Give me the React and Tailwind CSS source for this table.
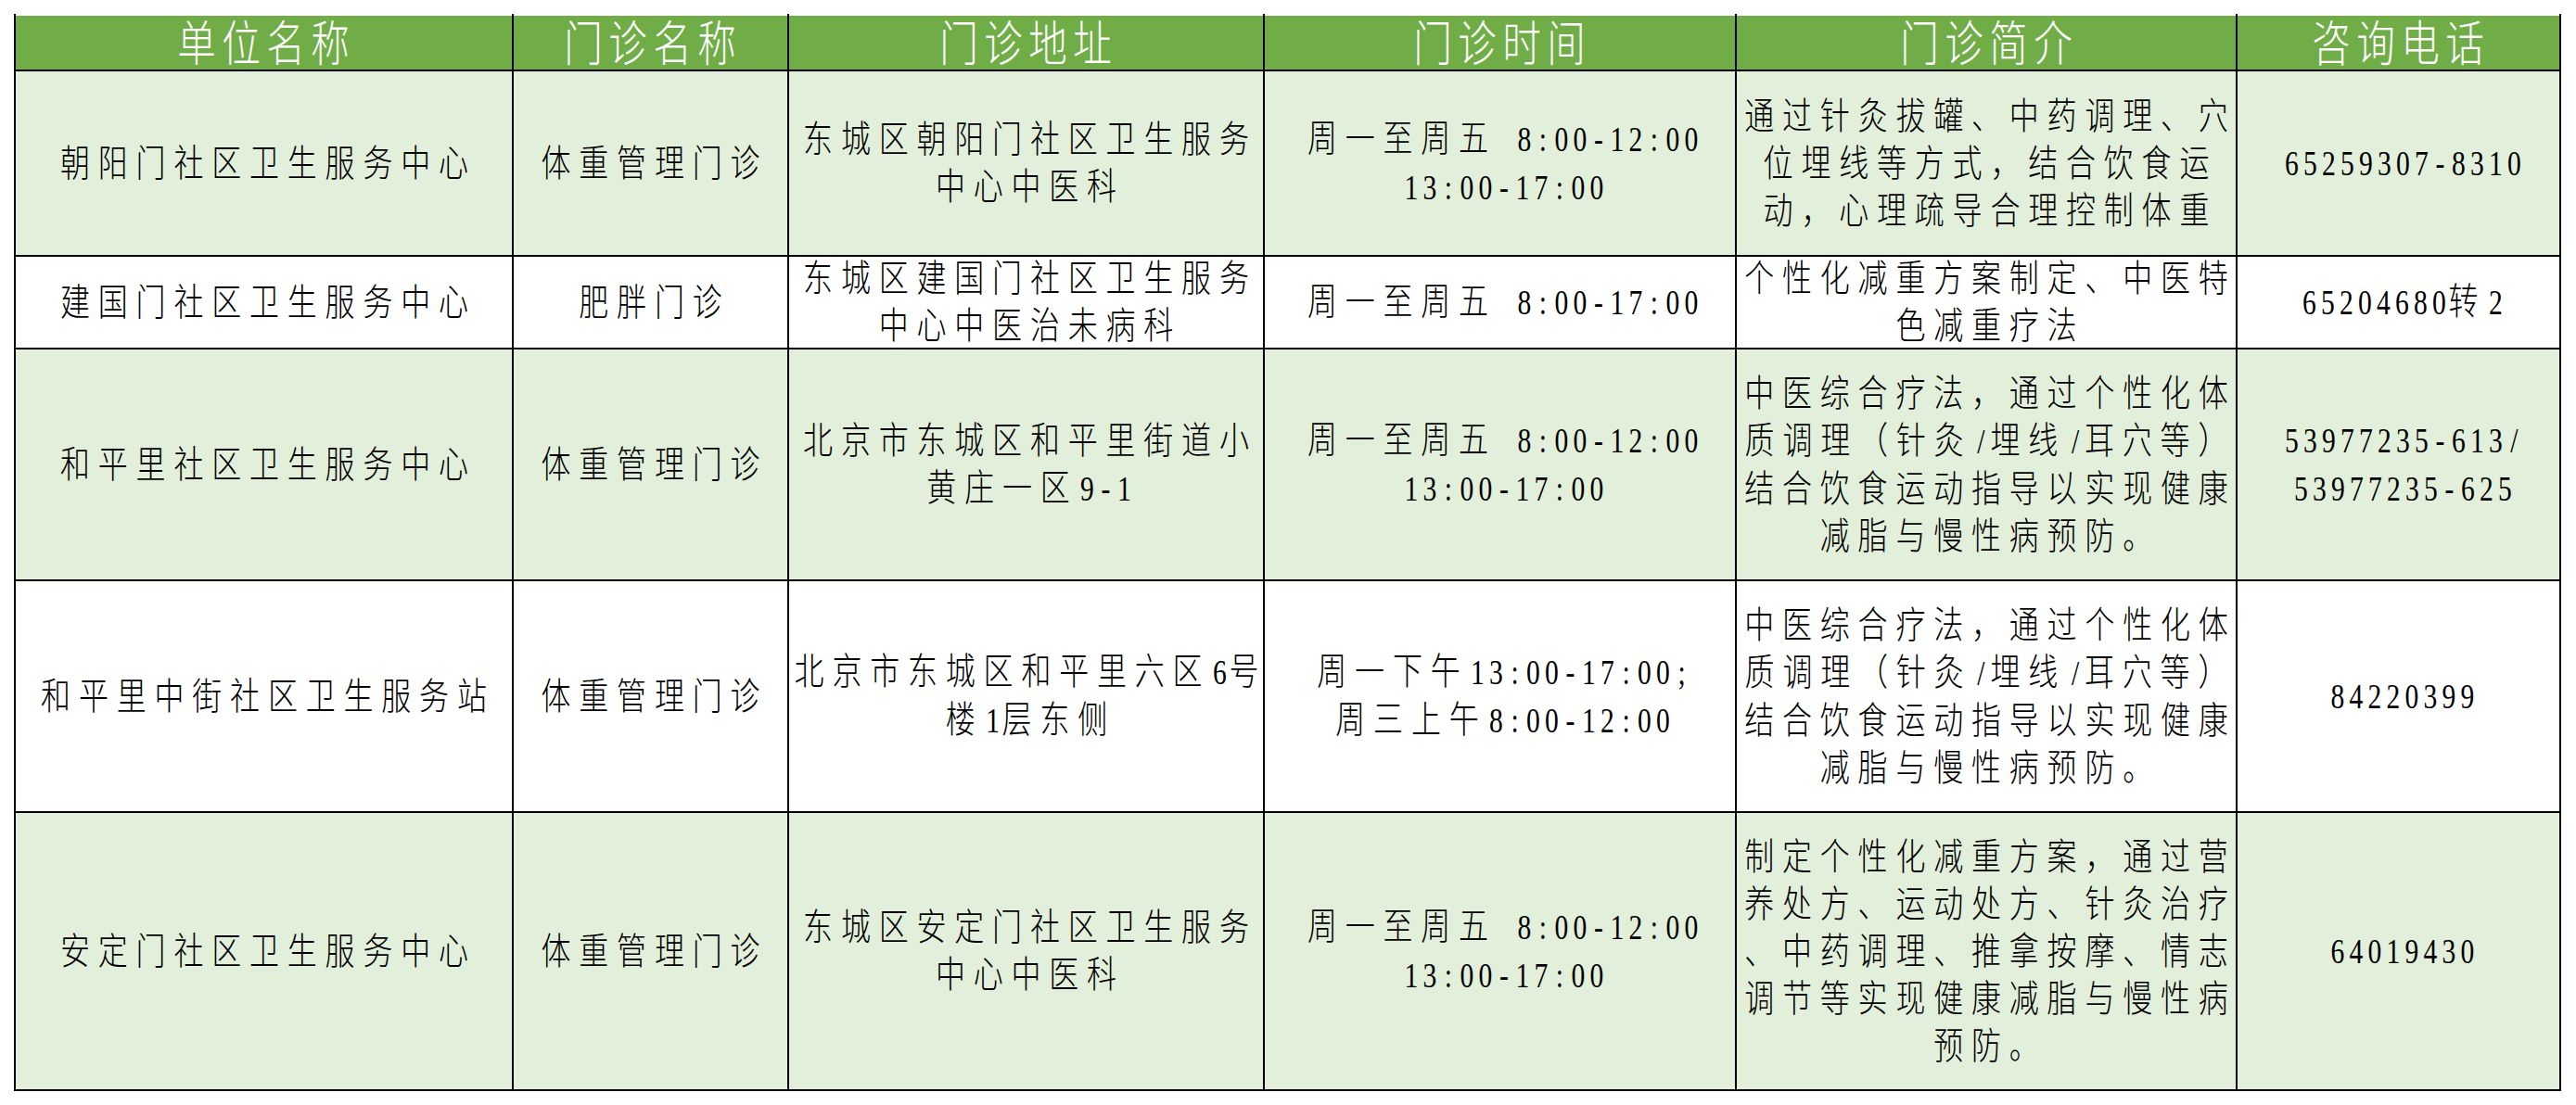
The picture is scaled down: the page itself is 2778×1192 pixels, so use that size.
import React from "react";

const rows = [
  {
    bg: "bg-[#E2EFDA]",
    cells: [
      ["朝阳门社区卫生服务中心"],
      ["体重管理门诊"],
      ["东城区朝阳门社区卫生服务", "中心中医科"],
      ["周一至周五 8:00-12:00", "13:00-17:00"],
      ["通过针灸拔罐、中药调理、穴", "位埋线等方式，结合饮食运", "动，心理疏导合理控制体重"],
      ["65259307-8310"],
    ],
  },
  {
    bg: "bg-white",
    cells: [
      ["建国门社区卫生服务中心"],
      ["肥胖门诊"],
      ["东城区建国门社区卫生服务", "中心中医治未病科"],
      ["周一至周五 8:00-17:00"],
      ["个性化减重方案制定、中医特", "色减重疗法"],
      ["65204680转2"],
    ],
  },
  {
    bg: "bg-[#E2EFDA]",
    cells: [
      ["和平里社区卫生服务中心"],
      ["体重管理门诊"],
      ["北京市东城区和平里街道小", "黄庄一区9-1"],
      ["周一至周五 8:00-12:00", "13:00-17:00"],
      ["中医综合疗法，通过个性化体", "质调理（针灸/埋线/耳穴等）", "结合饮食运动指导以实现健康", "减脂与慢性病预防。"],
      ["53977235-613/", "53977235-625"],
    ],
  },
  {
    bg: "bg-white",
    cells: [
      ["和平里中街社区卫生服务站"],
      ["体重管理门诊"],
      ["北京市东城区和平里六区6号", "楼1层东侧"],
      ["周一下午13:00-17:00;", "周三上午8:00-12:00"],
      ["中医综合疗法，通过个性化体", "质调理（针灸/埋线/耳穴等）", "结合饮食运动指导以实现健康", "减脂与慢性病预防。"],
      ["84220399"],
    ],
  },
  {
    bg: "bg-[#E2EFDA]",
    cells: [
      ["安定门社区卫生服务中心"],
      ["体重管理门诊"],
      ["东城区安定门社区卫生服务", "中心中医科"],
      ["周一至周五 8:00-12:00", "13:00-17:00"],
      ["制定个性化减重方案，通过营", "养处方、运动处方、针灸治疗", "、中药调理、推拿按摩、情志", "调节等实现健康减脂与慢性病", "预防。"],
      ["64019430"],
    ],
  },
];

const headers = ["单位名称", "门诊名称", "门诊地址", "门诊时间", "门诊简介", "咨询电话"];

function Line({ text }) {
  const parts = text.split(/([\x00-\x7F]+)/).filter((p) => p.length > 0);
  return (
    <div>
      {parts.map((p, i) =>
        /^[\x00-\x7F]+$/.test(p) ? (
          <span key={i} className="text-[37px] tracking-normal">
            {Array.from(p).map((ch, j) => (
              <span key={j} className="inline-block w-[25px] text-center">
                {ch === " " ? "\u00a0" : ch}
              </span>
            ))}
          </span>
        ) : (
          <span key={i}>{p}</span>
        )
      )}
    </div>
  );
}

export default function App() {
  return (
    <div className="min-h-screen bg-white pt-[15px] pl-[15px]">
      <div
        className="grid w-fit grid-cols-[537px_297px_513px_509px_540px_349px] grid-rows-[62px_200px_100px_250px_250px_300px] border-l-2 border-black"
        style={{ fontFamily: '"Liberation Serif", "Noto Sans CJK SC", serif' }}
      >
        {headers.map((h) => (
          <div
            key={h}
            className="flex items-center justify-center border-r-2 border-b-2 border-black bg-[#70AD47] bg-clip-content pt-[2px]"
          >
            <div className="scale-x-80 whitespace-nowrap pt-[6px] pl-[8px] text-[52px] leading-[56px] font-light tracking-[8px] text-white">
              {h}
            </div>
          </div>
        ))}
        {rows.map((row, ri) =>
          row.cells.map((lines, ci) => (
            <div
              key={ri + "-" + ci}
              className={
                "flex items-center justify-center border-r-2 border-b-2 border-black " + row.bg
              }
            >
              <div className="scale-x-80 whitespace-nowrap pl-[11px] text-center text-[40px] leading-[51px] font-light tracking-[11px] text-black">
                {lines.map((l, li) => (
                  <Line key={li} text={l} />
                ))}
              </div>
            </div>
          ))
        )}
      </div>
    </div>
  );
}
